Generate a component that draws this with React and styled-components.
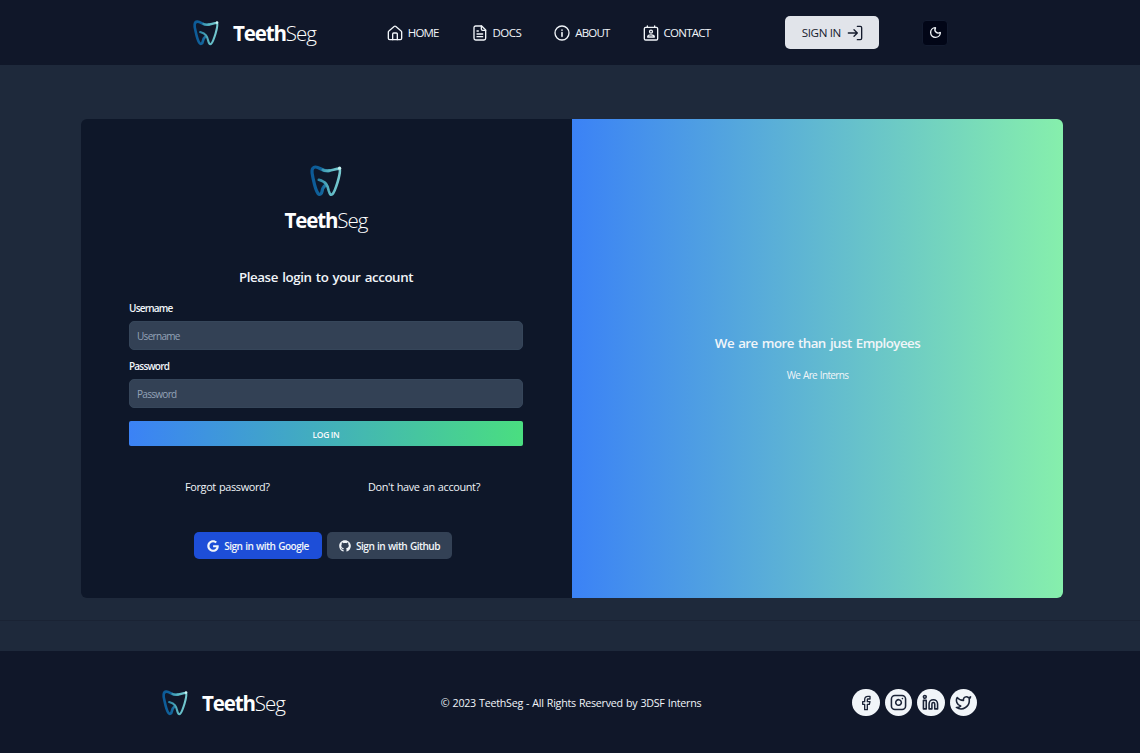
import React from "react";
import styled, { createGlobalStyle } from "styled-components";
import { Instagram, Facebook, Linkedin, Twitter, Moon } from "lucide-react";
import { FaGoogle, FaGithub } from "react-icons/fa";

const GlobalStyle = createGlobalStyle`
  *, *::before, *::after { box-sizing: border-box; }
  body {
    margin: 0;
    background: #1e293b;
    color: #f1f5f9;
    font-family: "Open Sans", "Noto Sans", sans-serif;
    font-size: 12px;
  }
  a { color: inherit; text-decoration: none; }
  button, input { font-family: inherit; }
  svg { display: block; flex: none; }
`;

const Page = styled.div`
  height: 753px;
  display: flex;
  flex-direction: column;
  overflow: hidden;
`;

const Header = styled.header`
  height: 65px;
  flex: none;
  display: flex;
  align-items: center;
  padding-left: 193px;
  background: #101729;
`;

const Brand = styled.a`
  display: flex;
  flex-direction: ${(p) => (p.$stacked ? "column" : "row")};
  align-items: center;
  gap: ${(p) => (p.$stacked ? "8px" : "14px")};
`;

const BrandName = styled.span`
  display: flex;
  font-size: 20.5px;
  line-height: 30px;
  color: #fff;
`;

const Strong = styled.span`
  font-weight: 700;
  letter-spacing: -1.15px;
`;

const Light = styled.span`
  font-weight: 300;
  letter-spacing: -1px;
`;

const Nav = styled.nav`
  display: flex;
  gap: 33px;
  margin-left: 71px;
`;

const NavLink = styled.a`
  display: flex;
  align-items: center;
  gap: 5px;
  font-size: 11.5px;
  line-height: 16px;
  letter-spacing: ${(p) => p.$track};
`;

const SignIn = styled.button`
  width: 94px;
  height: 33px;
  margin-left: 75px;
  padding: 0;
  display: flex;
  align-items: center;
  justify-content: center;
  gap: 6px;
  border: 0;
  border-radius: 5px;
  background: #e1e4ea;
  color: #141b2d;
  font-size: 11.6px;
  letter-spacing: -0.35px;
`;

const ThemeToggle = styled.button`
  width: 26px;
  height: 26px;
  margin-left: 43px;
  padding: 0;
  display: grid;
  place-items: center;
  border: 1px solid #131b2f;
  border-radius: 4px;
  background: #020617;
  color: #f1f5f9;
`;

const Main = styled.main`
  height: 556px;
  flex: none;
  padding: 54px 77px 0 81px;
  border-bottom: 1px solid #1a2334;
`;

const Card = styled.section`
  height: 478.5px;
  display: grid;
  grid-template-columns: 1fr 1fr;
  border-radius: 6px;
  overflow: hidden;
  background: #0e1729;
`;

const LoginPane = styled.div`
  padding: 46px 49px 0 48px;
  display: flex;
  flex-direction: column;
`;

const Title = styled.h1`
  margin: 32px 0 0;
  text-align: center;
  font-size: 13.3px;
  line-height: 20px;
  font-weight: 600;
  letter-spacing: -0.4px;
  word-spacing: 1.2px;
`;

const Form = styled.form`
  display: flex;
  flex-direction: column;
  margin-top: 14px;
`;

const Field = styled.label`
  display: flex;
  flex-direction: column;
  gap: 5px;
  margin-bottom: ${(p) => p.$space};
  font-size: 10px;
  line-height: 15px;
  font-weight: 600;
  letter-spacing: -0.8px;
`;

const Input = styled.input`
  height: 29px;
  padding: 0 7px;
  border: 1px solid #36465a;
  border-radius: 5px;
  background: #334155;
  font-size: 10px;
  letter-spacing: -0.7px;
  &::placeholder { color: #94a3b8; }
`;

const Submit = styled.button`
  height: 25px;
  padding: 1px 0 0;
  border: 0;
  border-radius: 2px;
  background: linear-gradient(90deg, #3b82f6, #4ade80);
  color: #f8fafc;
  font-size: 8.5px;
  font-weight: 600;
  letter-spacing: -0.35px;
`;

const Links = styled.div`
  display: flex;
  justify-content: space-between;
  margin-top: 33px;
  padding: 0 43px 0 56px;
  font-size: 10.9px;
  line-height: 16px;
  letter-spacing: -0.35px;
  word-spacing: 0.6px;
`;

const Providers = styled.div`
  display: flex;
  gap: 5px;
  margin: 37px 0 0 65px;
`;

const Provider = styled.button`
  width: ${(p) => p.$width};
  height: 27px;
  padding: 0;
  display: flex;
  align-items: center;
  justify-content: center;
  gap: 5px;
  border: 0;
  border-radius: 5px;
  background: ${(p) => p.$bg};
  color: #f1f5f9;
  font-size: 10.1px;
  font-weight: 600;
  letter-spacing: -0.55px;
  word-spacing: 0.7px;
`;

const Promo = styled.div`
  display: flex;
  flex-direction: column;
  align-items: center;
  padding-top: 214px;
  background: linear-gradient(90deg, #3b82f6, #86efac);
`;

const PromoTitle = styled.h2`
  margin: 0;
  font-size: 13.3px;
  line-height: 20px;
  font-weight: 600;
  letter-spacing: -0.53px;
  word-spacing: 1.2px;
`;

const PromoText = styled.p`
  margin: 15px 0 0;
  font-size: 10px;
  line-height: 15px;
  letter-spacing: -0.65px;
  word-spacing: 0.8px;
`;

const Footer = styled.footer`
  height: 102px;
  flex: none;
  margin-top: 30px;
  display: flex;
  align-items: center;
  padding: 1px 163px 0 162px;
  background: #101729;
`;

const Copyright = styled.p`
  margin: 0 0 0 156px;
  font-size: 10.7px;
  line-height: 16px;
  letter-spacing: -0.26px;
  word-spacing: 0.6px;
`;

const Socials = styled.div`
  display: flex;
  gap: 5px;
  margin-left: auto;
`;

const Social = styled.a`
  width: 27.5px;
  height: 27.5px;
  display: grid;
  place-items: center;
  border-radius: 50%;
  background: #f1f5f9;
  color: #1b2438;
`;

function Tooth({ size, id }) {
  return (
    <svg width={size} height={size} viewBox="0 0 80 80" fill="none" strokeLinecap="round" strokeLinejoin="round">
      <defs>
        <linearGradient id={`${id}-left`} x1="0" y1="0" x2="50" y2="0" gradientUnits="userSpaceOnUse">
          <stop stopColor="#0b5896" />
          <stop offset="0.6" stopColor="#12659c" />
          <stop offset="1" stopColor="#3794ac" />
        </linearGradient>
        <linearGradient id={`${id}-right`} x1="22" y1="0" x2="78" y2="0" gradientUnits="userSpaceOnUse">
          <stop stopColor="#2b86a5" />
          <stop offset="0.5" stopColor="#5db8c4" />
          <stop offset="1" stopColor="#7accd2" />
        </linearGradient>
      </defs>
      <path d="M48 14C32 18 24 4 13 5C3 6 4 18 7 30C10 44 13 62 20 71C24 76 29 73 30 66C31 58 34 54 39 50" stroke={`url(#${id}-left)`} strokeWidth="8" />
      <path d="M32 12C46 20 60 9 74 9C77 14 73 29 69 43C65 56 61 69 56 73C52 77 49 72 47 65C44 50 40 42 22 37" stroke={`url(#${id}-right)`} strokeWidth="6.5" />
      <circle cx="74" cy="8" r="4" fill="#c9f4f3" />
    </svg>
  );
}

function Logo({ id, stacked }) {
  return (
    <Brand href="#" $stacked={stacked}>
      <Tooth size={stacked ? 32 : 26} id={id} />
      <BrandName><Strong>Teeth</Strong><Light>Seg</Light></BrandName>
    </Brand>
  );
}

const lineProps = { fill: "none", stroke: "currentColor", strokeWidth: 2, strokeLinecap: "round", strokeLinejoin: "round" };

function LineIcon({ children }) {
  return <svg width="16" height="16" viewBox="0 0 24 24" {...lineProps}>{children}</svg>;
}

function HomeIcon() {
  return (
    <LineIcon>
      <path d="M2 10.5a2 2 0 0 1 .8-1.6l7.9-6.6a2 2 0 0 1 2.600 0l7.9 6.6a2 2 0 0 1 .8 1.6V20a2 2 0 0 1-2 2H4a2 2 0 0 1-2-2z" />
      <path d="M8.500 22v-8.500a1.500 1.500 0 0 1 1.500-1.500h4a1.500 1.500 0 0 1 1.500 1.500V22" />
    </LineIcon>
  );
}

function DocIcon() {
  return (
    <LineIcon>
      <path d="M14.5 1.5H5.5A2.5 2.5 0 0 0 3 4v16a2.5 2.5 0 0 0 2.5 2.5H18a2.5 2.5 0 0 0 2.5-2.5V7.5z" />
      <path d="M14 1.5V6a2 2 0 0 0 2 2h4.5" />
      <path d="M7.5 9h2M7.5 13.5H16M7.5 17.5H16" />
    </LineIcon>
  );
}

function InfoIcon() {
  return (
    <LineIcon>
      <circle cx="12" cy="12" r="10.5" />
      <path d="M12 11.5V17M12 7.500v.2" strokeWidth="2.4" />
    </LineIcon>
  );
}

function ContactIcon() {
  return (
    <LineIcon>
      <rect x="2" y="3.5" width="20" height="19" rx="2" />
      <path d="M6.5 1.5v2M17.5 1.5v2" />
      <circle cx="12" cy="10" r="2.2" />
      <path d="M7 18c0-2.500 2.200-3.300 5-3.300s5 .8 5 3.300z" />
    </LineIcon>
  );
}

function EnterIcon() {
  return (
    <LineIcon>
      <path d="M2 12h13.500M10.500 7l5 5-5 5" />
      <path d="M15.500 2H20a2 2 0 0 1 2 2v16a2 2 0 0 1-2 2h-4.500" />
    </LineIcon>
  );
}

export default function App() {
  return (
    <>
      <GlobalStyle />
      <Page>
        <Header>
          <Logo id="header" />
          <Nav>
            <NavLink href="#" $track="-0.85px"><HomeIcon />HOME</NavLink>
            <NavLink href="#" $track="-0.55px"><DocIcon />DOCS</NavLink>
            <NavLink href="#" $track="-0.8px"><InfoIcon />ABOUT</NavLink>
            <NavLink href="#" $track="-0.75px"><ContactIcon />CONTACT</NavLink>
          </Nav>
          <SignIn>SIGN IN<EnterIcon /></SignIn>
          <ThemeToggle aria-label="Toggle theme"><Moon size={13} strokeWidth={2.5} /></ThemeToggle>
        </Header>
        <Main>
          <Card>
            <LoginPane>
              <Logo id="login" stacked />
              <Title>Please login to your account</Title>
              <Form>
                <Field $space="9px">Username<Input placeholder="Username" /></Field>
                <Field $space="13px">Password<Input type="password" placeholder="Password" /></Field>
                <Submit type="button">LOG IN</Submit>
              </Form>
              <Links>
                <a href="#">Forgot password?</a>
                <a href="#">Don't have an account?</a>
              </Links>
              <Providers>
                <Provider $width="128px" $bg="#1d4ed8"><FaGoogle size={12} />Sign in with Google</Provider>
                <Provider $width="125px" $bg="#334155"><FaGithub size={12} />Sign in with Github</Provider>
              </Providers>
            </LoginPane>
            <Promo>
              <PromoTitle>We are more than just Employees</PromoTitle>
              <PromoText>We Are Interns</PromoText>
            </Promo>
          </Card>
        </Main>
        <Footer>
          <Logo id="footer" />
          <Copyright>© 2023 TeethSeg - All Rights Reserved by 3DSF Interns</Copyright>
          <Socials>
            <Social href="#" aria-label="Facebook"><Facebook size={16} /></Social>
            <Social href="#" aria-label="Instagram"><Instagram size={17} strokeWidth={2.2} /></Social>
            <Social href="#" aria-label="LinkedIn"><Linkedin size={17} strokeWidth={2.2} /></Social>
            <Social href="#" aria-label="Twitter"><Twitter size={17} strokeWidth={2.2} /></Social>
          </Socials>
        </Footer>
      </Page>
    </>
  );
}
